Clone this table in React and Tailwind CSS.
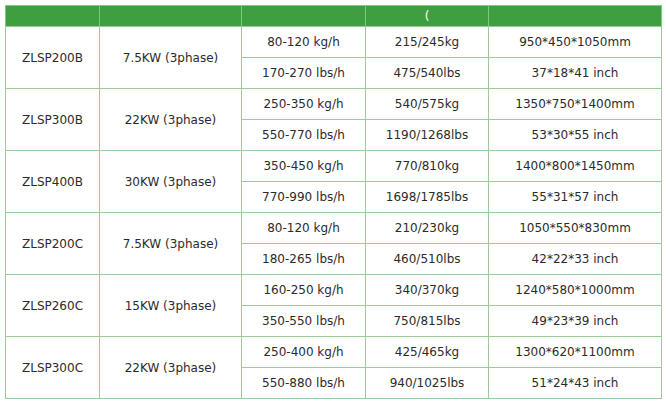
const data = [
  ["ZLSP200B", "7.5KW (3phase)", ["80-120 kg/h", "215/245kg", "950*450*1050mm"], ["170-270 lbs/h", "475/540lbs", "37*18*41 inch"]],
  ["ZLSP300B", "22KW (3phase)", ["250-350 kg/h", "540/575kg", "1350*750*1400mm"], ["550-770 lbs/h", "1190/1268lbs", "53*30*55 inch"]],
  ["ZLSP400B", "30KW (3phase)", ["350-450 kg/h", "770/810kg", "1400*800*1450mm"], ["770-990 lbs/h", "1698/1785lbs", "55*31*57 inch"]],
  ["ZLSP200C", "7.5KW (3phase)", ["80-120 kg/h", "210/230kg", "1050*550*830mm"], ["180-265 lbs/h", "460/510lbs", "42*22*33 inch"]],
  ["ZLSP260C", "15KW (3phase)", ["160-250 kg/h", "340/370kg", "1240*580*1000mm"], ["350-550 lbs/h", "750/815lbs", "49*23*39 inch"]],
  ["ZLSP300C", "22KW (3phase)", ["250-400 kg/h", "425/465kg", "1300*620*1100mm"], ["550-880 lbs/h", "940/1025lbs", "51*24*43 inch"]],
];

const cell = "bg-white flex items-center justify-center";

export default function App() {
  return (
    <div
      className="m-[5px] w-[657px] text-[12px] text-[#2b2b2b]"
      style={{ fontFamily: '"DejaVu Sans", Verdana, sans-serif' }}
    >
      <div className="grid grid-cols-[93px_141px_123px_122px_172px] gap-px bg-[#7fc87f] px-px pt-px">
        <div className="h-[20px] bg-[#3f9e3f]"></div>
        <div className="h-[20px] bg-[#3f9e3f]"></div>
        <div className="h-[20px] bg-[#3f9e3f]"></div>
        <div className="h-[20px] bg-[#3f9e3f] flex items-center justify-center text-white">(</div>
        <div className="h-[20px] bg-[#3f9e3f]"></div>
      </div>
      <div className="grid grid-cols-[93px_141px_123px_122px_172px] auto-rows-[30px] gap-px bg-[#9acc9a] p-px">
        {data.map((g) => (
          <React.Fragment key={g[0]}>
            <div className={cell + " row-span-2"}>{g[0]}</div>
            <div className={cell + " row-span-2"}>{g[1]}</div>
            {g[2].map((t, i) => (
              <div key={"a" + i} className={cell}>{t}</div>
            ))}
            {g[3].map((t, i) => (
              <div key={"b" + i} className={cell}>{t}</div>
            ))}
          </React.Fragment>
        ))}
      </div>
    </div>
  );
}

import React from "react";
